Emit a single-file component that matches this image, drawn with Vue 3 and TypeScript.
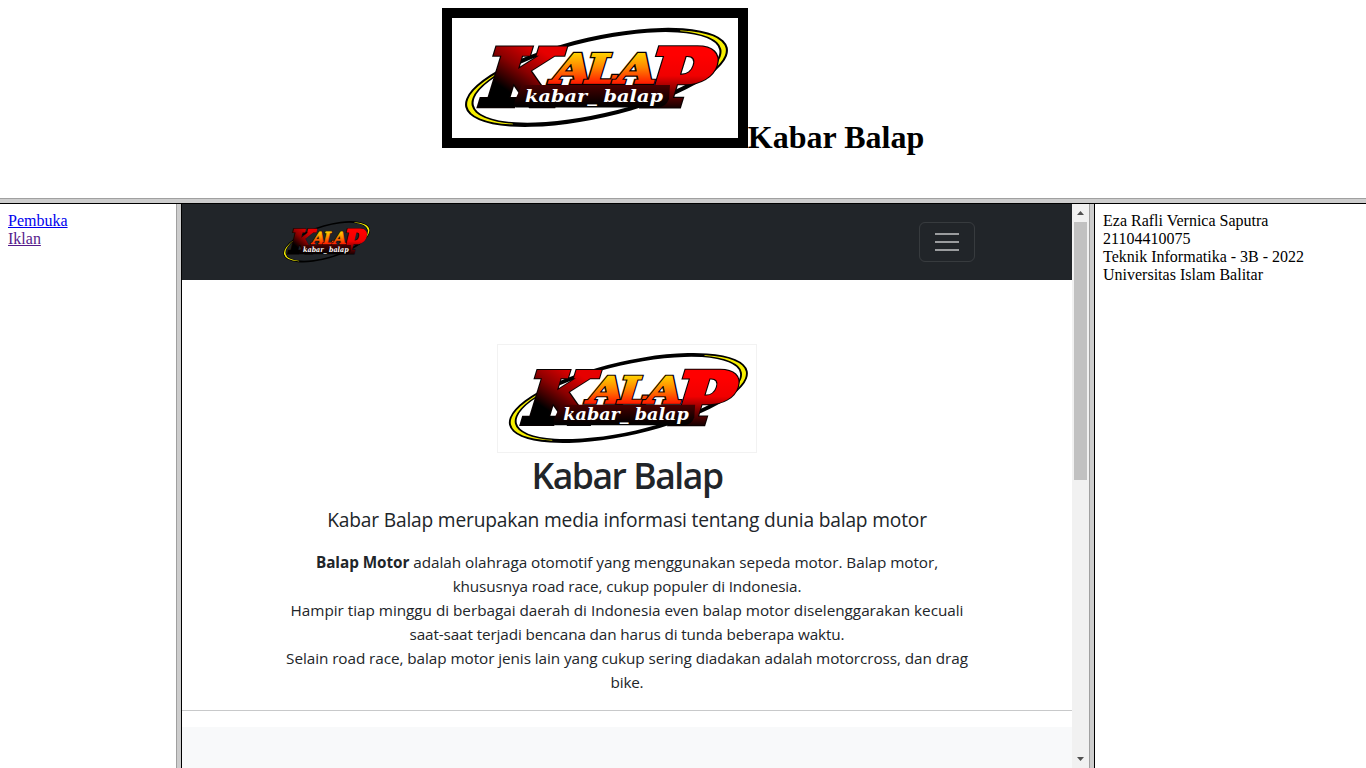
<script setup lang="ts">
import { defineComponent, h } from 'vue'

const ellipse = (rx: number, ry: number): string =>
  `M${-rx} 0A${rx} ${ry} 0 1 1 ${rx} 0A${rx} ${ry} 0 1 1 ${-rx} 0Z`

const ring = ellipse(134.5, 40.6) + ellipse(125.8, 36.6)
const crescents = ellipse(132.4, 38) + ellipse(127.9, 38.2)

const stop = (offset: string, color: string) => h('stop', { offset, 'stop-color': color })

interface Glyph {
  text: string
  x: number
  y: number
  size: number
  width: number
  fill: string
  bulk: number
}

const glyphs: Glyph[] = [
  { text: 'K', x: 25, y: 87, size: 77, width: 73, fill: 'kalap-k', bulk: 4.5 },
  { text: 'P', x: 188, y: 87, size: 77, width: 64, fill: 'kalap-p', bulk: 5 },
  { text: 'A', x: 97, y: 64.5, size: 40, width: 39, fill: 'kalap-a', bulk: 1.6 },
  { text: 'L', x: 130, y: 64.5, size: 40, width: 33, fill: 'kalap-a', bulk: 1.6 },
  { text: 'A', x: 161, y: 64.5, size: 40, width: 39, fill: 'kalap-a', bulk: 1.6 },
]

const gradient = (id: string, x1: number, y1: number, x2: number, y2: number, stops: [string, string][]) =>
  h('linearGradient', { id, gradientUnits: 'userSpaceOnUse', x1, y1, x2, y2 }, stops.map(([o, c]) => stop(o, c)))

const glyphText = (g: Glyph, paint: string, width: number, hidden: boolean) =>
  h(
    'text',
    {
      'font-family': '"DejaVu Serif", serif',
      'font-weight': 700,
      'font-size': g.size,
      textLength: g.width,
      lengthAdjust: 'spacingAndGlyphs',
      fill: paint,
      stroke: paint,
      'stroke-width': width,
      'aria-hidden': hidden,
    },
    g.text,
  )

const KalapLogo = defineComponent({
  name: 'KalapLogo',
  setup() {
    return () =>
      h('svg', { viewBox: '0 0 286 120', preserveAspectRatio: 'none', role: 'img', 'aria-label': 'Kalap' }, [
        h('defs', [
          gradient('kalap-k', 34, -62, 12, -22, [['0', '#e60000'], ['.5', '#8a0000'], ['1', '#000']]),
          gradient('kalap-p', 0, -50, 0, 2, [['0', '#ff0000'], ['.4', '#f00000'], ['.75', '#6a0000'], ['1', '#1a0000']]),
          gradient('kalap-a', 0, -30, 0, 0, [['0', '#ffd400'], ['.5', '#ff8400'], ['1', '#ff2000']]),
          gradient('kalap-bar', 0, 67, 0, 89, [['0', '#480000'], ['.8', '#0a0000'], ['1', '#000']]),
          h('clipPath', { id: 'kalap-ends' }, [h('path', { d: 'M-140-45H-92V45H-140ZM92-45H140V45H92Z' })]),
        ]),
        h('g', { transform: 'translate(144.5 59.4) rotate(-12.8)' }, [
          h('path', { d: ring, fill: '#000', 'fill-rule': 'evenodd' }),
          h('path', { d: crescents, fill: '#f5ee00', 'fill-rule': 'evenodd', 'clip-path': 'url(#kalap-ends)' }),
        ]),
        glyphs.slice(0, 2).map((g) =>
          h('g', { transform: `translate(${g.x} ${g.y}) skewX(-17)` }, [
            glyphText(g, '#080000', g.bulk + 2.2, true),
            glyphText(g, `url(#${g.fill})`, g.bulk, false),
          ]),
        ),
        h('path', {
          d: 'M70 67H218L217 81Q214 89 206 89.500H64Q61 88 63 82Z',
          fill: 'url(#kalap-bar)',
        }),
        glyphs.slice(2).map((g) =>
          h('g', { transform: `translate(${g.x} ${g.y}) skewX(-17)` }, [
            glyphText(g, '#080000', g.bulk + 2.4, true),
            glyphText(g, `url(#${g.fill})`, g.bulk, false),
          ]),
        ),
        h(
          'text',
          {
            x: 73,
            y: 84,
            'font-family': '"DejaVu Serif", serif',
            'font-weight': 700,
            'font-style': 'italic',
            'font-size': 17.5,
            textLength: 138,
            lengthAdjust: 'spacingAndGlyphs',
            fill: '#fff',
          },
          'kabar_ balap',
        ),
      ])
  },
})

interface Line {
  strong?: string
  text: string
  tracking: number
}

const lines: Line[] = [
  {
    strong: 'Balap Motor',
    text: ' adalah olahraga otomotif yang menggunakan sepeda motor. Balap motor,',
    tracking: -0.05,
  },
  { text: 'khususnya road race, cukup populer di Indonesia.', tracking: -0.125 },
  {
    text: 'Hampir tiap minggu di berbagai daerah di Indonesia even balap motor diselenggarakan kecuali',
    tracking: -0.03,
  },
  { text: 'saat-saat terjadi bencana dan harus di tunda beberapa waktu.', tracking: -0.12 },
  {
    text: 'Selain road race, balap motor jenis lain yang cukup sering diadakan adalah motorcross, dan drag',
    tracking: -0.07,
  },
  { text: 'bike.', tracking: -0.2 },
]

const identity: string[] = [
  'Eza Rafli Vernica Saputra',
  '21104410075',
  'Teknik Informatika - 3B - 2022',
  'Universitas Islam Balitar',
]
</script>

<template>
  <div class="frameset">
    <header class="top">
      <h1><KalapLogo class="logo-top" />Kabar Balap</h1>
    </header>
    <div class="split-h"></div>
    <div class="columns">
      <nav class="left">
        <a class="link">Pembuka</a>
        <a class="link visited">Iklan</a>
      </nav>
      <div class="split-v"></div>
      <main class="middle">
        <div class="page">
          <div class="navbar">
            <KalapLogo class="logo-nav" />
            <button class="toggler" aria-label="Menu">
              <svg viewBox="0 0 30 30" width="30" height="30">
                <path d="M3 7h24M3 15h24M3 23h24" stroke="#fff" stroke-opacity=".55" stroke-width="2" />
              </svg>
            </button>
          </div>
          <section class="hero">
            <KalapLogo class="logo-hero" />
            <h2>Kabar Balap</h2>
            <p class="lead">Kabar Balap merupakan media informasi tentang dunia balap motor</p>
            <div class="copy">
              <p v-for="line in lines" :key="line.text" :style="{ letterSpacing: line.tracking + 'px' }">
                <strong v-if="line.strong">{{ line.strong }}</strong>{{ line.text }}
              </p>
            </div>
          </section>
          <div class="rule"></div>
          <div class="next"></div>
        </div>
        <div class="scrollbar">
          <svg class="arrow" viewBox="0 0 17 18"><path d="M5 11h7L8.500 7z" fill="#505050" /></svg>
          <div class="thumb"></div>
          <svg class="arrow down" viewBox="0 0 17 18"><path d="M5 7h7L8.500 11z" fill="#505050" /></svg>
        </div>
      </main>
      <div class="split-v"></div>
      <aside class="right">
        <div v-for="row in identity" :key="row">{{ row }}</div>
      </aside>
    </div>
  </div>
</template>

<style>
body {
  margin: 0;
  overflow: hidden;
}
</style>

<style scoped>
.frameset {
  width: 1366px;
  height: 768px;
  display: flex;
  flex-direction: column;
  overflow: hidden;
  background: #fff;
  color: #000;
  font: 16px/18px "Liberation Serif", serif;
}
.top {
  height: 190px;
  padding-top: 8px;
  flex: none;
}
.top h1 {
  margin: 0;
  display: flex;
  justify-content: center;
  align-items: last baseline;
  font-size: 32px;
  line-height: 37px;
}
.logo-top {
  box-sizing: border-box;
  width: 306px;
  height: 140px;
  border: 10px solid #000;
}
.split-h {
  box-sizing: border-box;
  height: 6px;
  flex: none;
  background: #cdcdcd;
  border-top: 1px solid #a0a0a0;
  border-bottom: 1px solid #000;
}
.split-v {
  box-sizing: border-box;
  width: 6px;
  flex: none;
  background: #cdcdcd;
  border-left: 1px solid #a0a0a0;
  border-right: 1px solid #000;
}
.columns {
  flex: 1;
  min-height: 0;
  display: flex;
}
.left {
  box-sizing: border-box;
  width: 176px;
  padding: 8px;
  display: flex;
  flex-direction: column;
  align-items: flex-start;
}
.link {
  color: #0000ee;
  text-decoration: underline;
}
.visited {
  color: #551a8b;
}
.right {
  flex: 1;
  padding: 8px;
}
.middle {
  width: 907px;
  display: flex;
  overflow: hidden;
}
.page {
  width: 890px;
  display: flex;
  flex-direction: column;
  color: #212529;
  font-family: "Open Sans", sans-serif;
}
.navbar {
  box-sizing: border-box;
  height: 76px;
  flex: none;
  padding: 0 97px;
  display: flex;
  align-items: center;
  justify-content: space-between;
  background: #212529;
}
.logo-nav {
  width: 94.4px;
  height: 50px;
}
.toggler {
  box-sizing: border-box;
  width: 56px;
  height: 40px;
  padding: 0;
  display: flex;
  align-items: center;
  justify-content: center;
  background: none;
  border: 1px solid rgba(255, 255, 255, 0.1);
  border-radius: 6px;
}
.hero {
  height: 430px;
  flex: none;
  box-sizing: border-box;
  padding-top: 64px;
  display: flex;
  flex-direction: column;
  align-items: center;
  white-space: nowrap;
}
.logo-hero {
  box-sizing: border-box;
  width: 260px;
  height: 109px;
  flex: none;
  outline: 1px solid #f2f2f2;
  outline-offset: -1px;
}
.hero h2 {
  margin: 0;
  height: 52px;
  font-size: 35.5px;
  font-weight: 600;
  line-height: 45px;
  letter-spacing: -1.45px;
}
.lead {
  margin: 0;
  height: 45px;
  font-size: 19.2px;
  line-height: 30px;
  letter-spacing: -0.19px;
}
.copy p {
  margin: 0;
  height: 24px;
  font-size: 15.3px;
  line-height: 24px;
  text-align: center;
}
.rule {
  height: 1px;
  flex: none;
  margin-bottom: 16px;
  background: #c8c9ca;
}
.next {
  flex: 1;
  background: #f8f9fa;
}
.scrollbar {
  width: 17px;
  display: flex;
  flex-direction: column;
  background: #f1f1f1;
}
.arrow {
  width: 17px;
  height: 18px;
  flex: none;
}
.thumb {
  width: 13px;
  height: 258px;
  margin: 0 2px;
  background: #c1c1c1;
}
.down {
  margin-top: auto;
}
</style>
